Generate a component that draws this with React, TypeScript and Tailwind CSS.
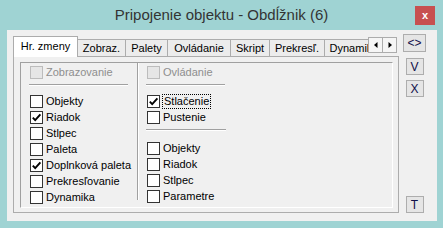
import React from 'react';

type CheckProps = { label: string; checked?: boolean; disabled?: boolean; focus?: boolean };

function Check({ label, checked, disabled, focus }: CheckProps) {
  return (
    <div className="flex h-[13px] items-center gap-[2px]">
      <span
        className={`flex h-[13px] w-[13px] shrink-0 items-center justify-center border ${
          disabled ? 'border-[#bcbcbc] bg-[#e6e6e6]' : 'border-[#333333] bg-white'
        }`}
      >
        {checked && (
          <svg width="11" height="11" viewBox="0 0 11 11">
            <path d="M1.8 5.6 L4.2 8.2 L9.4 2.4" fill="none" stroke="#000" strokeWidth="1.9" />
          </svg>
        )}
      </span>
      <span
        className={`whitespace-nowrap leading-[13px] ${disabled ? 'text-[#8e8e8e]' : 'text-black'} ${
          focus ? 'border border-dotted border-black px-px' : 'pl-px'
        }`}
      >
        {label}
      </span>
    </div>
  );
}

function Etched({ className }: { className: string }) {
  return <div className={`h-[2px] border-t border-b border-t-[#a0a0a0] border-b-white ${className}`} />;
}

const tabs = [
  { label: 'Zobraz.', w: 'w-[49px]' },
  { label: 'Palety', w: 'w-[43px]' },
  { label: 'Ovládanie', w: 'w-[64px]' },
  { label: 'Skript', w: 'w-[40px]' },
  { label: 'Prekresľ.', w: 'w-[56px]' },
  { label: 'Dynamika', w: 'w-[60px]' },
];

function SideButton({ label, wide }: { label: string; wide?: boolean }) {
  return (
    <div
      className={`flex items-center justify-center border border-[#adadad] bg-[#e5e5e5] text-[12px] text-[#10104a] ${
        wide ? 'h-[18px] w-[23px]' : 'h-[17px] w-[18px]'
      }`}
    >
      {label}
    </div>
  );
}

export default function App() {
  return (
    <div className="flex h-[228px] w-[443px] flex-col bg-[#9fd3d3] font-['Liberation_Sans',Arial,sans-serif]">
      {/* Title bar */}
      <div className="relative flex h-[30px] shrink-0 items-center justify-center">
        <span className="text-[15px] text-[#333333]">Pripojenie objektu - Obdĺžnik (6)</span>
        <div className="absolute right-[8px] top-[6px] flex h-[19px] w-[20px] items-center justify-center bg-[#c75050] text-[11px] font-bold text-white">
          x
        </div>
      </div>

      {/* Client area */}
      <div className="mb-[7px] ml-[7px] mr-[6px] flex flex-1 bg-[#f0f0f0] pl-[6px] pt-[4px] pb-[8px]">
        {/* Tab control */}
        <div className="mt-[2px] flex w-[386px] flex-col text-[11px]">
          <div className="relative z-10 flex h-[21px] items-end">
            <div className="flex h-[21px] w-[355px] items-end overflow-hidden">
              <div className="flex h-[21px] w-[65px] shrink-0 items-center justify-center border-l border-r border-t border-[#acacac] bg-white pb-[1px] text-black">
                Hr. zmeny
              </div>
              {tabs.map((t) => (
                <div
                  key={t.label}
                  className={`-ml-px flex h-[18px] shrink-0 items-center justify-center border border-[#acacac] bg-[#ececec] text-black ${t.w}`}
                >
                  <span className="whitespace-nowrap">{t.label}</span>
                </div>
              ))}
            </div>
            <div className="mb-[4px] flex self-end">
              <div className="flex h-[16px] w-[15px] items-center justify-center border border-[#acacac] bg-[#f5f5f5]">
                <svg width="4" height="6" viewBox="0 0 4 6">
                  <path d="M3.5 0 L0 3 L3.5 6 Z" fill="#000" />
                </svg>
              </div>
              <div className="-ml-px flex h-[16px] w-[15px] items-center justify-center border border-[#acacac] bg-[#f5f5f5]">
                <svg width="4" height="6" viewBox="0 0 4 6">
                  <path d="M0.5 0 L4 3 L0.5 6 Z" fill="#000" />
                </svg>
              </div>
            </div>
          </div>

          {/* Tab page */}
          <div className="-mt-px h-[157px] w-[386px] border border-[#acacac] bg-[#f0f0f0] pl-[6px] pt-[5px]">
            <div className="flex h-[146px] w-[373px] border border-b-white border-l-[#a0a0a0] border-r-white border-t-[#a0a0a0] bg-[#f0f0f0]">
              {/* Left column */}
              <div className="flex w-[116px] flex-col pl-[9px] pt-[3px]">
                <Check label="Zobrazovanie" disabled />
                <Etched className="-ml-px mt-[5px] w-[99px]" />
                <div className="mt-[9px] flex flex-col gap-[3px]">
                  <Check label="Objekty" />
                  <Check label="Riadok" checked />
                  <Check label="Stlpec" />
                  <Check label="Paleta" />
                  <Check label="Doplnková paleta" checked />
                  <Check label="Prekresľovanie" />
                  <Check label="Dynamika" />
                </div>
              </div>

              {/* Separator */}
              <div className="h-[137px] w-[2px] border-l border-r border-l-[#a0a0a0] border-r-white" />

              {/* Right column */}
              <div className="flex flex-col pl-[8px] pt-[3px]">
                <Check label="Ovládanie" disabled />
                <Etched className="-ml-px mt-[5px] w-[79px]" />
                <div className="mt-[9px] flex flex-col gap-[3px]">
                  <Check label="Stlačenie" checked focus />
                  <Check label="Pustenie" />
                </div>
                <Etched className="-ml-px mt-[5px] w-[80px]" />
                <div className="mt-[11px] flex flex-col gap-[3px]">
                  <Check label="Objekty" />
                  <Check label="Riadok" />
                  <Check label="Stlpec" />
                  <Check label="Parametre" />
                </div>
              </div>
            </div>
          </div>
        </div>

        {/* Side buttons */}
        <div className="ml-[4px] flex w-[23px] flex-col items-center">
          <SideButton label="<>" wide />
          <div className="mt-[6px]">
            <SideButton label="V" />
          </div>
          <div className="mt-[5px]">
            <SideButton label="X" />
          </div>
          <div className="mt-auto">
            <SideButton label="T" />
          </div>
        </div>
      </div>
    </div>
  );
}
